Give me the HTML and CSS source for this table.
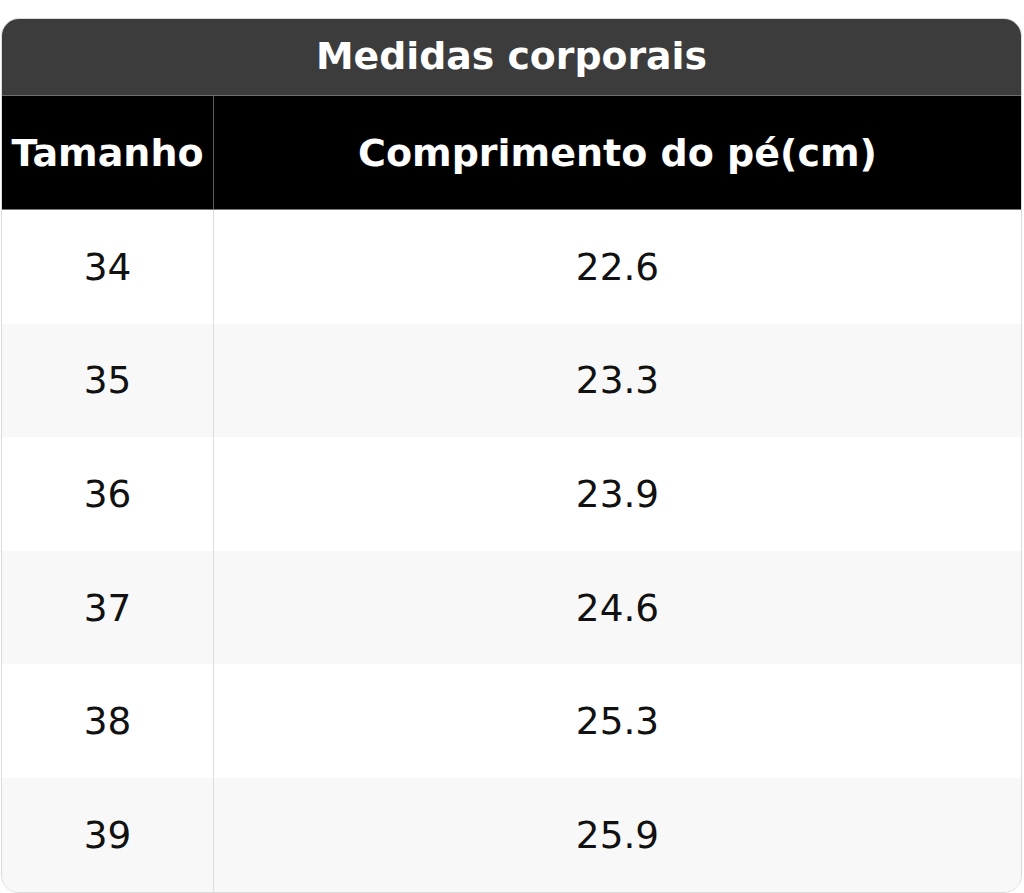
FILE: index.html
```html
<!DOCTYPE html>
<html lang="pt">
<head>
<meta charset="utf-8">
<title>Medidas corporais</title>
<link rel="stylesheet" href="styles.css">
</head>
<body>
<div class="sheet">
  <div class="title">Medidas corporais</div>
  <table class="sizes">
    <thead>
      <tr><th class="c1">Tamanho</th><th class="c2">Comprimento do pé(cm)</th></tr>
    </thead>
    <tbody>
      <tr><td class="c1">34</td><td class="c2">22.6</td></tr>
      <tr><td class="c1">35</td><td class="c2">23.3</td></tr>
      <tr><td class="c1">36</td><td class="c2">23.9</td></tr>
      <tr><td class="c1">37</td><td class="c2">24.6</td></tr>
      <tr><td class="c1">38</td><td class="c2">25.3</td></tr>
      <tr><td class="c1">39</td><td class="c2">25.9</td></tr>
    </tbody>
  </table>
</div>
</body>
</html>
```

FILE: styles.css
```css
html, body {
  margin: 0;
  padding: 0;
  background: #ffffff;
}
body {
  font-family: "DejaVu Sans", Verdana, sans-serif;
  color: #111111;
}
.sheet {
  margin: 18px 2px 0 1px;
  border: 1px solid #dadada;
  border-radius: 18px;
  overflow: hidden;
  background: #ffffff;
}
.title {
  height: 77px;
  padding-bottom: 3px;
  box-sizing: border-box;
  background: #3c3c3c;
  color: #ffffff;
  font-weight: bold;
  font-size: 37.8px;
  display: flex;
  align-items: center;
  justify-content: center;
  border-bottom: 1px solid #6e6e6e;
}
.sizes {
  width: 100%;
  border-collapse: collapse;
  table-layout: fixed;
}
.sizes .c1 {
  width: 211px;
}
.sizes th {
  height: 113px;
  background: #000000;
  color: #ffffff;
  font-weight: bold;
  font-size: 38px;
  padding: 0;
  text-align: center;
  border-bottom: 1px solid #777777;
}
.sizes th.c1 {
  border-right: 1px solid #5a5a5a;
}
.sizes td {
  height: 113.6px;
  padding: 0;
  text-align: center;
  font-size: 37.4px;
  color: #111111;
}
.sizes td.c1 {
  border-right: 1px solid #dddddd;
}
.sizes tbody tr:nth-child(even) td {
  background: #f8f8f8;
}
```
